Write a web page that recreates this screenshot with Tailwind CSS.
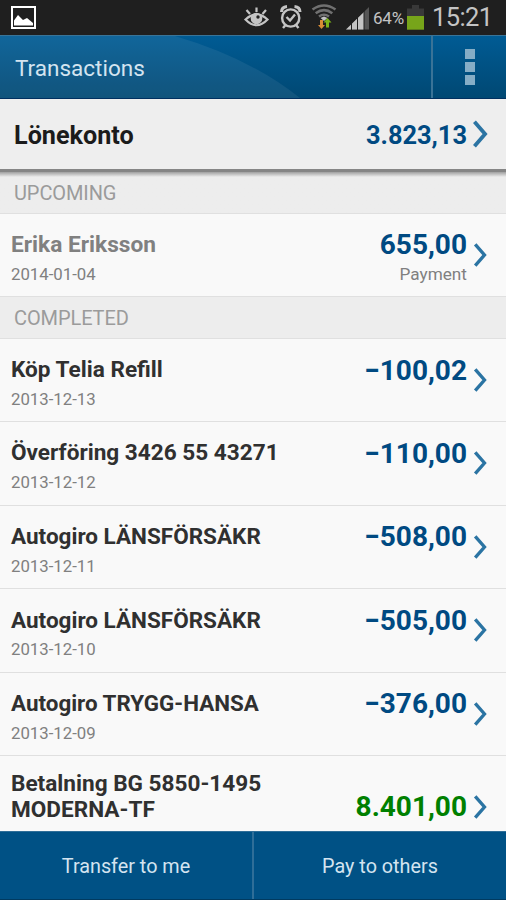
<!DOCTYPE html>
<html lang="en">
<head>
<meta charset="utf-8">
<title>Transactions</title>
<script src="https://cdn.jsdelivr.net/npm/@tailwindcss/browser@4"></script>
</head>
<body class="w-[506px] h-[900px] overflow-hidden bg-[#f9f9f9] font-['Roboto',sans-serif] flex flex-col whitespace-nowrap">
<svg class="hidden"><defs><symbol id="chev" viewBox="0 0 16 28"><path d="M2.3 2.5 12.3 14 2.3 25.5" fill="none" stroke="#2b74a3" stroke-width="3.6"/></symbol></defs></svg>

<header class="h-[35px] shrink-0 bg-[#1f1f1f] flex items-center text-[#c4c4c4]">
  <svg class="ml-[10px] w-[28px] h-[35px]" viewBox="10 0 28 35"><rect x="12" y="7" width="23" height="21" fill="none" stroke="#fff" stroke-width="2"/><path d="M14 25.500v-5l4-5.500 5 5 4-2 6 5v2.500z" fill="#fff"/></svg>
  <svg class="ml-auto w-[130px] h-[35px]" viewBox="242 0 130 35" fill="none">
    <g stroke="#c4c4c4" stroke-width="2.200"><path d="M245.500 19.500Q256.500 9.500 267.500 19.500 256.500 31 245.500 19.500Z"/><path d="m246.500 10 3.500 4m6.500-6.500v4.500m9.500-2-3.500 4"/><circle cx="256.500" cy="18.500" r="4.700" fill="#c4c4c4"/></g><circle cx="258" cy="17" r="1.700" fill="#1f1f1f"/>
    <g stroke="#c4c4c4" stroke-width="2.400"><circle cx="290.700" cy="18" r="8.600"/><path d="M286.500 17 290 20.500 295 14.500M285.500 25l-2.500 3m13-3 2.500 3" /><path d="M281.500 12q0-5 5.500-5.500m13 5.500q0-5-5.500-5.500" stroke-width="3"/></g>
    <g stroke="#707070" stroke-width="2.600"><path d="M312.500 9.500Q324 1.500 335.500 9.500M315.700 13.200Q324 7.200 332.300 13.200"/><path d="M319 16.500Q324 13 329 16.500"/></g><path d="m320.500 18 3.500-1.500 3.500 1.500-3.500 3z" fill="#c4c4c4"/>
    <path d="M320 20h3v5h2l-3.500 4-3.500-4h2z" fill="#d98d35"/><path d="M326 27.500v-5h-2.500l4-4.500 4 4.500H329v5z" fill="#7cb518"/>
    <path d="M346 29.500 369 7v22.500z" fill="#555"/><path d="M346 29.500 364 12v17.500z" fill="#c4c4c4"/><path d="M351.500 23v7M357.500 17v13M364 11v19" stroke="#1f1f1f"/>
  </svg>
  <span class="w-[34px] text-[17px] leading-[36px] tracking-[-0.2px] ml-[1px]">64%</span>
  <svg class="w-[17px] h-[35px]" viewBox="407 0 17 35"><path d="M407 8.500h5V5h7v3.500h5V16h-17z" fill="#393939"/><path d="M407 16h17v13.700h-17z" fill="#77a51a"/></svg>
  <span class="w-[82px] pl-[8px] text-[25.5px] leading-[39px] tracking-[-0.6px]">15:21</span>
</header>

<div class="h-[64px] shrink-0 relative bg-linear-to-b from-[#005b94] to-[#004873] border-t border-[#397498] border-b border-b-[#003060] flex text-[#d4e4f0]">
  <svg class="absolute inset-0 w-full h-[62px]" viewBox="0 0 506 62" preserveAspectRatio="none"><path d="M0 0H175Q250 22 300 62H0Z" fill="#fff" fill-opacity=".065"/></svg>
  <h1 class="relative flex-1 pl-[15px] text-[22.5px] leading-[64px]">Transactions</h1>
  <div class="relative w-[75px] border-l-2 border-[#3a7397] flex flex-col items-center justify-center gap-[3px]">
    <i class="block size-[10px] bg-[#85adc6]"></i><i class="block size-[10px] bg-[#85adc6]"></i><i class="block size-[10px] bg-[#85adc6]"></i>
  </div>
</div>

<section class="h-[70px] shrink-0 bg-[#eee] flex items-center pl-[14px] pr-[17px] pt-[3px] font-bold">
  <span class="text-[25.2px] text-[#1b1b1b]">Lönekonto</span>
  <span class="ml-auto text-[25.4px] text-[#004a82]">3.823,13</span>
  <svg class="ml-[5px] w-[17px] h-[30px] -mt-[3px]"><use href="#chev"/></svg>
</section>

<main class="flex-1 min-h-0 overflow-hidden">
  <h2 class="h-[45px] bg-linear-to-b from-[#858585] from-[2.5px] via-[#999] via-[2.5px] to-[#ededed] to-[8px] border-b border-[#e0e0e0] pl-[14px] pt-[2px] text-[20px] leading-[44px] tracking-[-0.1px] text-[#9b9b9b]">UPCOMING</h2>
  <div class="h-[83px] border-b border-[#e0e0e0] flex pl-[11px] pr-[18px]">
    <div class="pt-[16px] text-[#808080]"><p class="text-[22.7px] leading-[30px] font-bold">Erika Eriksson</p><p class="mt-[4px] text-[16.8px] leading-[20px]">2014-01-04</p></div>
    <div class="ml-auto pt-[15px] text-right"><p class="text-[28px] leading-[32px] font-bold text-[#004a82]">655,00</p><p class="mt-[3px] text-[17.2px] leading-[20px] text-[#808080]">Payment</p></div>
    <svg class="ml-[6px] mt-[28px] w-[15px] h-[26px]"><use href="#chev"/></svg>
  </div>
  <h2 class="h-[42px] bg-[#ededed] border-b border-[#e0e0e0] pl-[14px] text-[20px] leading-[43px] tracking-[-0.1px] text-[#9b9b9b]">COMPLETED</h2>
  <div class="h-[83.4px] border-b border-[#e0e0e0] flex pl-[11px] pr-[18px]">
    <div class="pt-[16px]"><p class="text-[22.6px] leading-[30px] font-bold text-[#303030]">Köp Telia Refill</p><p class="mt-[4px] text-[16.8px] leading-[20px] text-[#808080]">2013-12-13</p></div>
    <p class="ml-auto pt-[15.5px] text-[28px] leading-[32px] font-bold text-[#004a82]">−100,02</p>
    <svg class="ml-[6px] mt-[28px] w-[15px] h-[26px]"><use href="#chev"/></svg>
  </div>
  <div class="h-[83.4px] border-b border-[#e0e0e0] flex pl-[11px] pr-[18px]">
    <div class="pt-[16px]"><p class="text-[22.6px] leading-[30px] font-bold text-[#303030]">Överföring 3426 55 43271</p><p class="mt-[4px] text-[16.8px] leading-[20px] text-[#808080]">2013-12-12</p></div>
    <p class="ml-auto pt-[16px] text-[28px] leading-[32px] font-bold text-[#004a82]">−110,00</p>
    <svg class="ml-[6px] mt-[28px] w-[15px] h-[26px]"><use href="#chev"/></svg>
  </div>
  <div class="h-[83.4px] border-b border-[#e0e0e0] flex pl-[11px] pr-[18px]">
    <div class="pt-[15px]"><p class="text-[22.5px] leading-[30px] font-bold text-[#303030]">Autogiro LÄNSFÖRSÄKR</p><p class="mt-[5px] text-[16.8px] leading-[20px] text-[#808080]">2013-12-11</p></div>
    <p class="ml-auto pt-[15px] text-[28px] leading-[32px] font-bold text-[#004a82]">−508,00</p>
    <svg class="ml-[6px] mt-[28px] w-[15px] h-[26px]"><use href="#chev"/></svg>
  </div>
  <div class="h-[83.4px] border-b border-[#e0e0e0] flex pl-[11px] pr-[18px]">
    <div class="pt-[15.5px]"><p class="text-[22.5px] leading-[30px] font-bold text-[#303030]">Autogiro LÄNSFÖRSÄKR</p><p class="mt-[4.5px] text-[16.8px] leading-[20px] text-[#808080]">2013-12-10</p></div>
    <p class="ml-auto pt-[16px] text-[28px] leading-[32px] font-bold text-[#004a82]">−505,00</p>
    <svg class="ml-[6px] mt-[28px] w-[15px] h-[26px]"><use href="#chev"/></svg>
  </div>
  <div class="h-[83.4px] border-b border-[#e0e0e0] flex pl-[11px] pr-[18px]">
    <div class="pt-[15px]"><p class="text-[22.4px] leading-[30px] font-bold text-[#303030]">Autogiro TRYGG-HANSA</p><p class="mt-[5px] text-[16.8px] leading-[20px] text-[#808080]">2013-12-09</p></div>
    <p class="ml-auto pt-[15.500px] text-[28px] leading-[32px] font-bold text-[#004a82]">−376,00</p>
    <svg class="ml-[6px] mt-[28px] w-[15px] h-[26px]"><use href="#chev"/></svg>
  </div>
  <div class="flex pl-[11px] pr-[18px]">
    <p class="pt-[15px] text-[22.6px] leading-[26px] font-bold text-[#303030]">Betalning BG 5850-1495<br>MODERNA-TF</p>
    <p class="ml-auto pt-[35px] text-[28px] leading-[32px] font-bold text-[#008000]">8.401,00</p>
    <svg class="ml-[6px] mt-[38px] w-[15px] h-[26px]"><use href="#chev"/></svg>
  </div>
</main>

<footer class="h-[69px] shrink-0 bg-[#005185] border-t border-[#2f6e98] border-b border-b-[#003a60] flex text-center text-[19.8px] leading-[69px] text-[#d4e4f0]">
  <div class="w-[254px] border-r-2 border-[#2f6e98]">Transfer to me</div>
  <div class="flex-1">Pay to others</div>
</footer>
</body>
</html>
